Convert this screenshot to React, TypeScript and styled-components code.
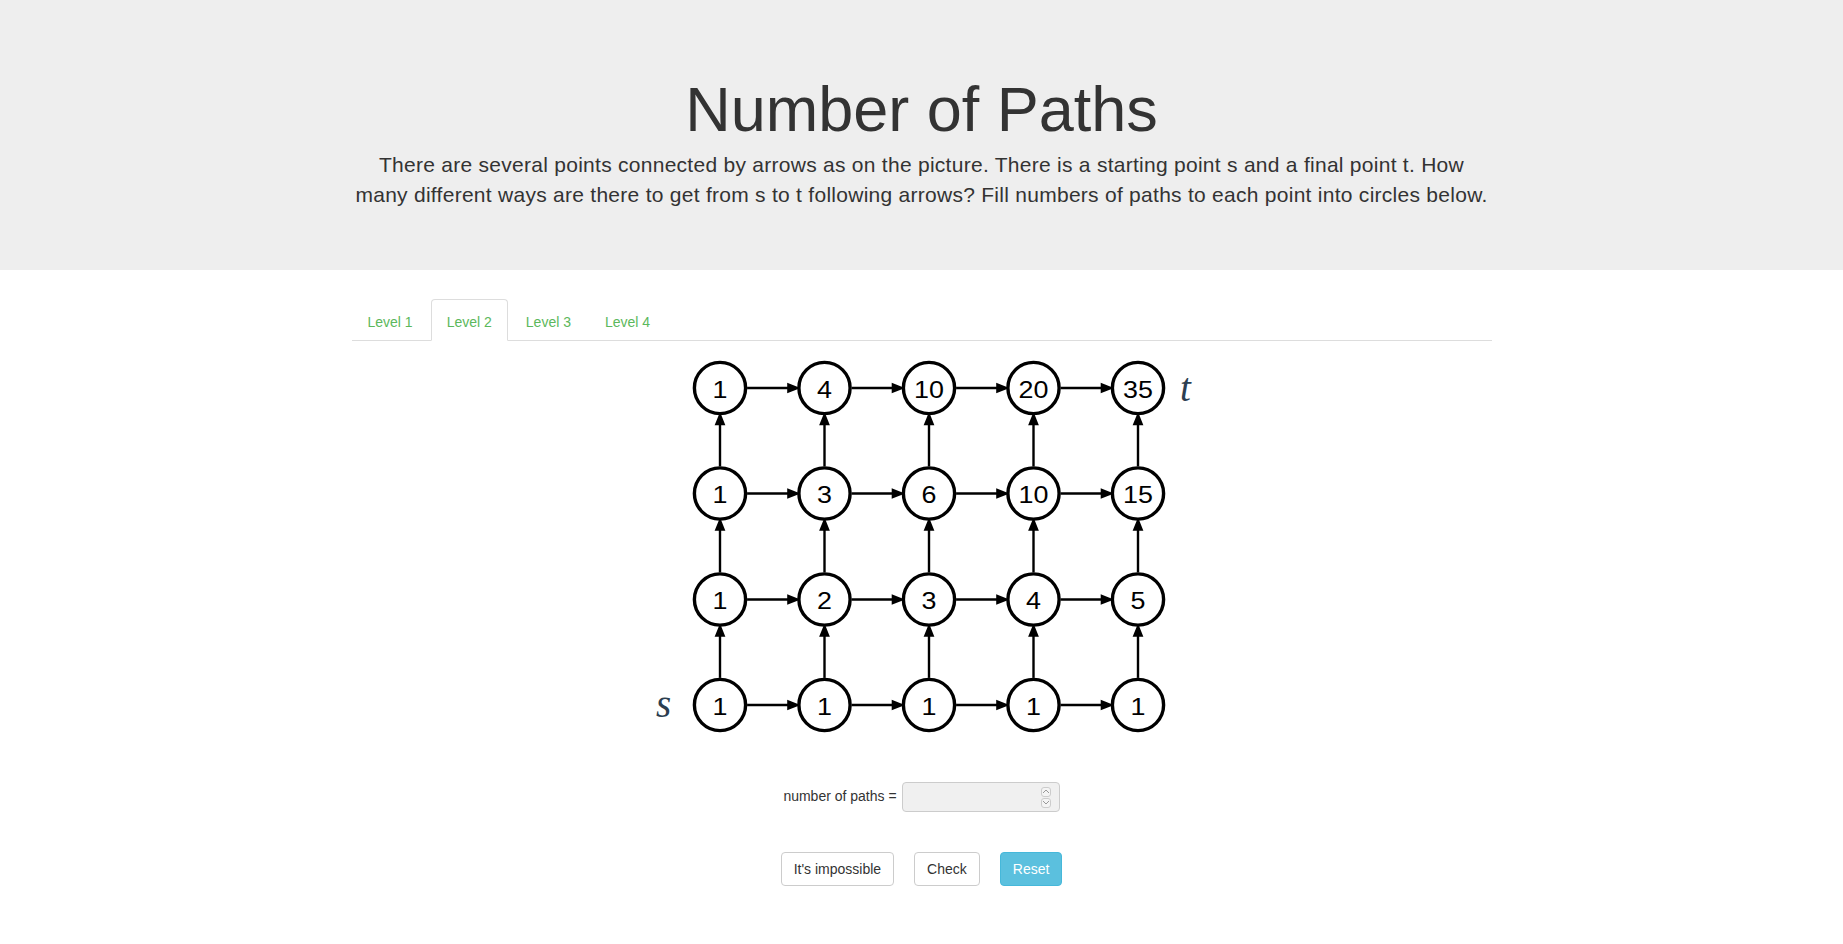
import React from 'react'
import styled, { createGlobalStyle } from 'styled-components'

const GlobalStyle = createGlobalStyle`
  * { box-sizing: border-box; }
  body {
    margin: 0;
    font-family: "Liberation Sans", Arial, sans-serif;
    font-size: 14px;
    line-height: 1.42857;
    color: #333;
    background: #fff;
  }
`

const values = [
  [1, 4, 10, 20, 35],
  [1, 3, 6, 10, 15],
  [1, 2, 3, 4, 5],
  [1, 1, 1, 1, 1],
]
const cols = [88, 192.5, 297, 401.5, 506]
const rows = [40, 145.5, 251.5, 357]
const R = 25.6
const levels = ['Level 1', 'Level 2', 'Level 3', 'Level 4']

const Graph = () => {
  const lines: React.ReactNode[] = []
  rows.forEach((y, r) => {
    cols.forEach((x, c) => {
      if (c < cols.length - 1) {
        const x1 = x + R + 1.5
        const x2 = cols[c + 1] - R - 1.5
        lines.push(<line key={`h${r}${c}`} x1={x1} y1={y} x2={x2 - 7} y2={y} />)
        lines.push(<polygon key={`ha${r}${c}`} points={`${x2},${y} ${x2 - 9},${y - 3.6} ${x2 - 9},${y + 3.6}`} />)
      }
      if (r > 0) {
        const y1 = y - R - 1.5
        const y2 = rows[r - 1] + R + 1.5
        lines.push(<line key={`v${r}${c}`} x1={x} y1={y1} x2={x} y2={y2 + 7} />)
        lines.push(<polygon key={`va${r}${c}`} points={`${x},${y2} ${x - 3.6},${y2 + 9} ${x + 3.6},${y2 + 9}`} />)
      }
    })
  })
  return (
    <Drawing width={580} height={400} viewBox="0 0 580 400">
      <g stroke="#000" strokeWidth={2.4} fill="#000">{lines}</g>
      {rows.map((y, r) =>
        cols.map((x, c) => (
          <g key={`n${r}${c}`}>
            <circle cx={x} cy={y} r={R} fill="#fff" stroke="#000" strokeWidth={3.4} />
            <NodeText transform={`translate(${x} ${y + 9.5}) scale(1.12 1)`} textAnchor="middle">
              {values[r][c]}
            </NodeText>
          </g>
        ))
      )}
      <MathLabel x={24} y={369}>s</MathLabel>
      <MathLabel x={548} y={53}>t</MathLabel>
    </Drawing>
  )
}

const App = () => {
  return (
    <>
      <GlobalStyle />
      <Jumbotron>
        <Container>
          <Title>Number of Paths</Title>
          <Lead>
            There are several points connected by arrows as on the picture. There is a starting point s and a final point t. How
            <br />
            many different ways are there to get from s to t following arrows? Fill numbers of paths to each point into circles below.
          </Lead>
        </Container>
      </Jumbotron>
      <Container>
        <Tabs>
          {levels.map((l, i) => (
            <Tab key={l} $active={i === 1}>{l}</Tab>
          ))}
        </Tabs>
        <Graph />
        <FormRow>
          <Label>number of paths =</Label>
          <InputBox>
            <Field type="text" disabled />
            <Spinner>
              <SpinBtn>
                <svg width="8" height="5" viewBox="0 0 8 5"><path d="M1 4 L4 1 L7 4" fill="none" stroke="#999" strokeWidth="1" /></svg>
              </SpinBtn>
              <SpinBtn>
                <svg width="8" height="5" viewBox="0 0 8 5"><path d="M1 1 L4 4 L7 1" fill="none" stroke="#999" strokeWidth="1" /></svg>
              </SpinBtn>
            </Spinner>
          </InputBox>
        </FormRow>
        <Buttons>
          <Button>It's impossible</Button>
          <Button>Check</Button>
          <Button $info>Reset</Button>
        </Buttons>
      </Container>
    </>
  )
}

export default App

const Jumbotron = styled.div`
  background: #eee;
  padding: 55px 0 45px;
  margin-bottom: 29px;
  text-align: center;
`
const Container = styled.div`
  width: 1170px;
  margin: 0 auto;
  padding: 0 15px;
`
const Title = styled.h1`
  font-size: 63px;
  font-weight: 500;
  line-height: 1.1;
  margin: 20px 0 6px;
  color: #333;
`
const Lead = styled.p`
  font-size: 21px;
  line-height: 30px;
  letter-spacing: 0.27px;
  margin: 0 0 15px;
  white-space: nowrap;
`
const Tabs = styled.ul`
  display: flex;
  list-style: none;
  margin: 0;
  padding: 0;
  border-bottom: 1px solid #ddd;
`
const Tab = styled.li<{ $active?: boolean }>`
  margin: 0 2px -1px 0;
  padding: 12px 15px 8px;
  line-height: 20px;
  font-size: 14px;
  color: #5cb85c;
  border: 1px solid ${p => (p.$active ? '#ddd' : 'transparent')};
  border-bottom-color: ${p => (p.$active ? '#fff' : 'transparent')};
  border-radius: 4px 4px 0 0;
  background: ${p => (p.$active ? '#fff' : 'transparent')};
`
const Drawing = styled.svg`
  display: block;
  margin: 7px auto 0;
`
const NodeText = styled.text`
  font-family: "Liberation Sans", Arial, sans-serif;
  font-size: 24px;
  fill: #000;
`
const MathLabel = styled.text`
  font-family: "Liberation Serif", "Times New Roman", serif;
  font-style: italic;
  font-size: 39px;
  fill: #2c3e50;
`
const FormRow = styled.div`
  display: flex;
  justify-content: center;
  align-items: center;
  gap: 5px;
  margin-top: 34px;
`
const Label = styled.span`
  font-size: 14px;
  color: #333;
`
const InputBox = styled.div`
  display: flex;
  align-items: center;
  width: 158px;
  height: 30px;
  border: 1px solid #ccc;
  border-radius: 4px;
  background: #f0f0f0;
  padding: 0 8px 0 10px;
`
const Field = styled.input`
  flex: 1;
  min-width: 0;
  border: none;
  background: transparent;
  outline: none;
  font-size: 12px;
`
const Spinner = styled.div`
  display: flex;
  flex-direction: column;
  gap: 1px;
`
const SpinBtn = styled.div`
  width: 10px;
  height: 10px;
  border: 1px solid #ccc;
  border-radius: 3px;
  display: flex;
  align-items: center;
  justify-content: center;
  background: #f4f4f4;
`
const Buttons = styled.div`
  display: flex;
  justify-content: center;
  gap: 20px;
  margin-top: 40px;
`
const Button = styled.button<{ $info?: boolean }>`
  font-family: "Liberation Sans", Arial, sans-serif;
  font-size: 14px;
  line-height: 20px;
  padding: 6px 12px;
  border-radius: 4px;
  border: 1px solid ${p => (p.$info ? '#46b8da' : '#ccc')};
  background: ${p => (p.$info ? '#5bc0de' : '#fff')};
  color: ${p => (p.$info ? '#fff' : '#333')};
`
